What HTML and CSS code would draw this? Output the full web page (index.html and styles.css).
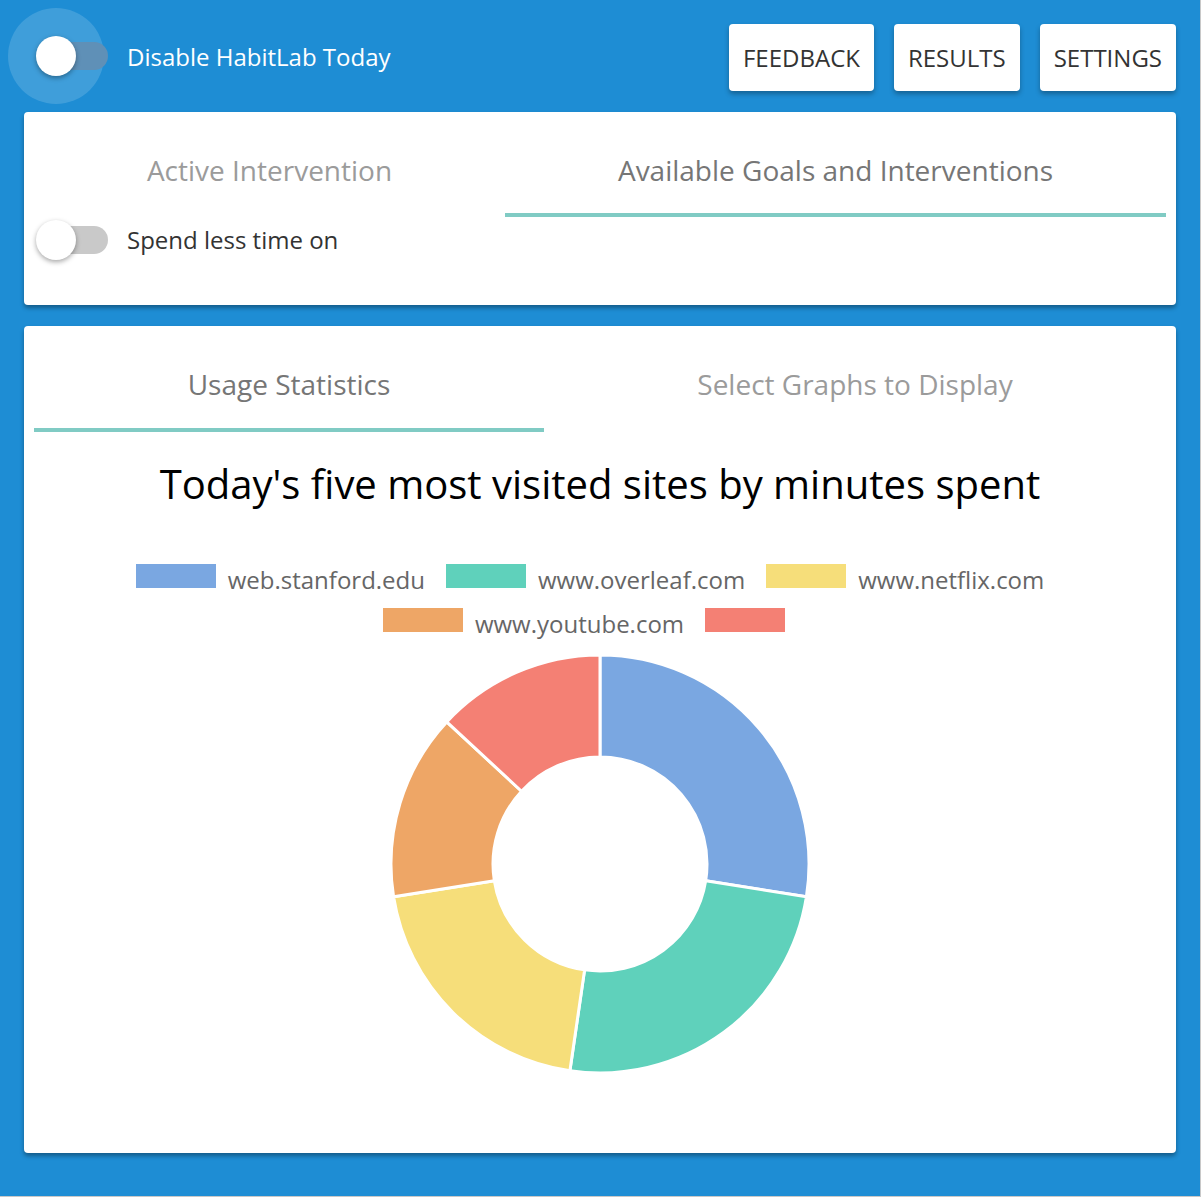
FILE: index.html
```html
<!DOCTYPE html>
<html>
<head>
<meta charset="utf-8">
<link rel="stylesheet" href="styles.css">
</head>
<body>
<div class="app">
  <header class="topbar">
    <div class="top-toggle">
      <div class="toggle toggle-halo">
        <span class="halo"></span>
        <span class="track track-dark"></span>
        <span class="thumb"></span>
      </div>
      <span class="top-label">Disable HabitLab Today</span>
    </div>
    <nav class="actions">
      <button class="btn">FEEDBACK</button>
      <button class="btn">RESULTS</button>
      <button class="btn">SETTINGS</button>
    </nav>
  </header>

  <section class="card card-goals">
    <div class="tabs">
      <div class="tab tab-active-int">Active Intervention</div>
      <div class="tab tab-fill tab-selected">Available Goals and Interventions</div>
    </div>
    <div class="goal-row">
      <div class="toggle">
        <span class="track track-grey"></span>
        <span class="thumb"></span>
      </div>
      <span class="goal-label">Spend less time on</span>
    </div>
  </section>

  <section class="card card-stats">
    <div class="tabs">
      <div class="tab tab-usage tab-selected">Usage Statistics</div>
      <div class="tab tab-fill">Select Graphs to Display</div>
    </div>
    <h1 class="chart-title">Today's five most visited sites by minutes spent</h1>
    <ul class="legend">
      <li class="legend-item"><span class="swatch c-blue"></span><span class="legend-text">web.stanford.edu</span></li>
      <li class="legend-item"><span class="swatch c-green"></span><span class="legend-text">www.overleaf.com</span></li>
      <li class="legend-item"><span class="swatch c-yellow"></span><span class="legend-text">www.netflix.com</span></li>
      <li class="legend-item"><span class="swatch c-orange"></span><span class="legend-text">www.youtube.com</span></li>
      <li class="legend-item"><span class="swatch c-red"></span><span class="legend-text"></span></li>
    </ul>
    <div class="donut-wrap">
      <svg class="donut" width="424" height="424" viewBox="-212 -212 424 424">
        <path fill="#7aa7e1" d="M0,-209 A209,209 0 0 1 206.43,32.69 L105.68,16.74 A107,107 0 0 0 0,-107 Z"/>
        <path fill="#5fd1bb" d="M206.43,32.69 A209,209 0 0 1 -30.10,206.82 L-15.41,105.89 A107,107 0 0 0 105.68,16.74 Z"/>
        <path fill="#f6de7a" d="M-30.10,206.82 A209,209 0 0 1 -206.43,32.69 L-105.68,16.74 A107,107 0 0 0 -15.41,105.89 Z"/>
        <path fill="#eea666" d="M-206.43,32.69 A209,209 0 0 1 -153.25,-142.11 L-78.46,-72.76 A107,107 0 0 0 -105.68,16.74 Z"/>
        <path fill="#f48074" d="M-153.25,-142.11 A209,209 0 0 1 0,-209 L0,-107 A107,107 0 0 0 -78.46,-72.76 Z"/>
      </svg>
    </div>
  </section>
</div>
</body>
</html>
```

FILE: styles.css
```css
* { box-sizing: border-box; }

body {
  margin: 0;
  background: #ffffff;
  font-family: "Open Sans", "Noto Sans", sans-serif;
}

.app {
  width: 1201px;
  height: 1197px;
  background: #1e8dd4;
  border-right: 1px solid #c8c8c8;
  border-bottom: 1px solid #c8c8c8;
  padding: 0 24px;
}

.topbar {
  height: 112px;
  display: flex;
  justify-content: space-between;
  align-items: flex-start;
  margin-left: -16px;
}

.top-toggle {
  display: flex;
  align-items: center;
  margin-top: 8px;
}

.toggle {
  position: relative;
  width: 76px;
  height: 40px;
  flex: none;
}

.toggle-halo {
  width: 96px;
  height: 96px;
}

.halo {
  position: absolute;
  left: 0;
  top: 0;
  width: 96px;
  height: 96px;
  border-radius: 50%;
  background: rgba(255, 255, 255, 0.15);
}

.track {
  position: absolute;
  width: 68px;
  height: 28px;
  border-radius: 14px;
}

.track-dark {
  left: 32px;
  top: 34px;
  background: #5f90b7;
}

.track-grey {
  left: 4px;
  top: 6px;
  background: #c9c9c9;
}

.thumb {
  position: absolute;
  width: 40px;
  height: 40px;
  border-radius: 50%;
  background: #ffffff;
  box-shadow: 0 2px 5px rgba(0, 0, 0, 0.35);
  left: 0;
  top: 0;
}

.toggle-halo .thumb {
  left: 28px;
  top: 28px;
}

.top-label {
  margin-left: 23px;
  color: #ffffff;
  font-size: 24px;
  line-height: 30px;
  margin-top: 2px;
}

.actions {
  display: flex;
  gap: 20px;
  margin-top: 24px;
}

.btn {
  height: 67px;
  padding: 0 14px;
  border: none;
  border-radius: 4px;
  background: #ffffff;
  color: #333333;
  font-family: "Open Sans", "Noto Sans", sans-serif;
  font-size: 24px;
  box-shadow: 0 3px 5px rgba(0, 0, 0, 0.3);
}

.card {
  background: #ffffff;
  border-radius: 4px;
  box-shadow: 0 3px 4px rgba(0, 0, 0, 0.35);
  padding: 0 10px;
}

.card-goals {
  height: 193px;
}

.card-stats {
  margin-top: 21px;
  height: 827px;
}

.tabs {
  display: flex;
}

.tab {
  height: 106px;
  padding-top: 40px;
  line-height: 36px;
  text-align: center;
  font-size: 28px;
  color: #9b9b9b;
  border-bottom: 4px solid transparent;
}

.tab-selected {
  color: #767676;
  border-bottom-color: #80cbc4;
}

.tab-active-int { width: 471px; }
.tab-usage { width: 510px; }
.tab-fill { flex: 1; }

.card-goals .tab { height: 105px; }

.goal-row {
  display: flex;
  align-items: center;
  margin-top: 3px;
  padding-left: 2px;
}

.goal-label {
  margin-left: 15px;
  font-size: 24px;
  color: #333333;
  line-height: 30px;
}

.chart-title {
  margin: 26px 0 0;
  text-align: center;
  font-weight: 400;
  font-size: 40px;
  line-height: 52px;
  color: #000000;
}

.legend {
  list-style: none;
  margin: 54px 0 0;
  padding: 0 20px 0 0;
  display: flex;
  flex-wrap: wrap;
  justify-content: center;
  column-gap: 21px;
  row-gap: 20px;
}

.legend-item {
  display: flex;
  align-items: center;
  height: 24px;
}

.swatch {
  width: 80px;
  height: 24px;
  margin-right: 12px;
}

.legend-text {
  font-size: 24px;
  line-height: 24px;
  color: #666666;
  position: relative;
  top: 4px;
}

.c-blue { background: #7aa7e1; }
.c-green { background: #5fd1bb; }
.c-yellow { background: #f6de7a; }
.c-orange { background: #eea666; }
.c-red { background: #f48074; }

.donut-wrap {
  display: flex;
  justify-content: center;
  margin-top: 20px;
}

.donut path {
  stroke: #ffffff;
  stroke-width: 3;
  stroke-linejoin: miter;
}
```
